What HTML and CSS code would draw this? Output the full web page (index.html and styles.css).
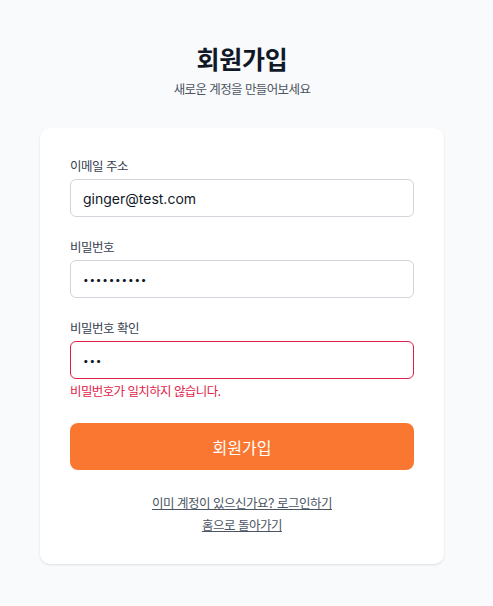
FILE: index.html
```html
<!DOCTYPE html>
<html lang="ko">
<head>
<meta charset="utf-8">
<link rel="stylesheet" href="styles.css">
</head>
<body>
<main class="page">
  <header class="head">
    <h1 class="title">회원가입</h1>
    <p class="subtitle">새로운 계정을 만들어보세요</p>
  </header>
  <form class="card">
    <div class="field">
      <label class="label">이메일 주소</label>
      <div class="input">ginger@test.com</div>
    </div>
    <div class="field">
      <label class="label">비밀번호</label>
      <div class="input dots">••••••••••</div>
    </div>
    <div class="field last">
      <label class="label">비밀번호 확인</label>
      <div class="input dots error">•••</div>
      <p class="err-msg">비밀번호가 일치하지 않습니다.</p>
    </div>
    <button type="button" class="btn">회원가입</button>
    <div class="links">
      <a class="link" href="#">이미 계정이 있으신가요? 로그인하기</a>
      <a class="link" href="#">홈으로 돌아가기</a>
    </div>
  </form>
</main>
</body>
</html>
```
FILE: styles.css
```css
* { box-sizing: border-box; }
html, body { margin: 0; padding: 0; }
body {
  background: #f9fafb;
  font-family: Inter, "Noto Sans CJK KR", "Noto Sans", sans-serif;
  color: #111827;
  height: 606px;
}
.page {
  width: 404px;
  margin-left: 40px;
  padding-top: 44px;
}
.head { text-align: center; }
.title {
  margin: 0;
  font-size: 25px;
  font-weight: 700;
  line-height: 32px;
  letter-spacing: -0.3px;
  color: #111827;
}
.subtitle {
  margin: 5px 0 0;
  font-size: 12.5px;
  line-height: 18px;
  letter-spacing: -0.6px;
  color: #4b5563;
}
.card {
  margin-top: 29px;
  background: #fff;
  border-radius: 10px;
  box-shadow: 0 1px 3px rgba(0,0,0,0.08), 0 1px 2px rgba(0,0,0,0.04);
  padding: 30px 30px 29px;
  display: flex;
  flex-direction: column;
}
.field { display: flex; flex-direction: column; margin-bottom: 22px; }
.field.last { margin-bottom: 22px; }
.label {
  font-size: 12.5px;
  line-height: 18px;
  letter-spacing: -0.5px;
  color: #374151;
  font-weight: 400;
  margin-bottom: 3px;
}
.input {
  height: 38px;
  border: 1px solid #d1d5db;
  border-radius: 6px;
  padding: 0 12px;
  display: flex;
  align-items: center;
  font-size: 14px;
  color: #111827;
}
.dots { font-size: 10px; letter-spacing: 0.8px; }
.input.error { border-color: #e11d48; }
.err-msg {
  margin: 4px 0 0;
  font-size: 12.5px;
  line-height: 18px;
  letter-spacing: -0.6px;
  color: #e11d48;
}
.btn {
  height: 47px;
  border: none;
  border-radius: 8px;
  background: #f97731;
  color: #fff;
  font-family: inherit;
  font-size: 16px;
  font-weight: 400;
}
.links {
  margin-top: 25px;
  display: flex;
  flex-direction: column;
  align-items: center;
  gap: 4px;
}
.link {
  font-size: 12.5px;
  line-height: 18px;
  letter-spacing: -0.5px;
  color: #4b5563;
  text-decoration: underline;
}
```
